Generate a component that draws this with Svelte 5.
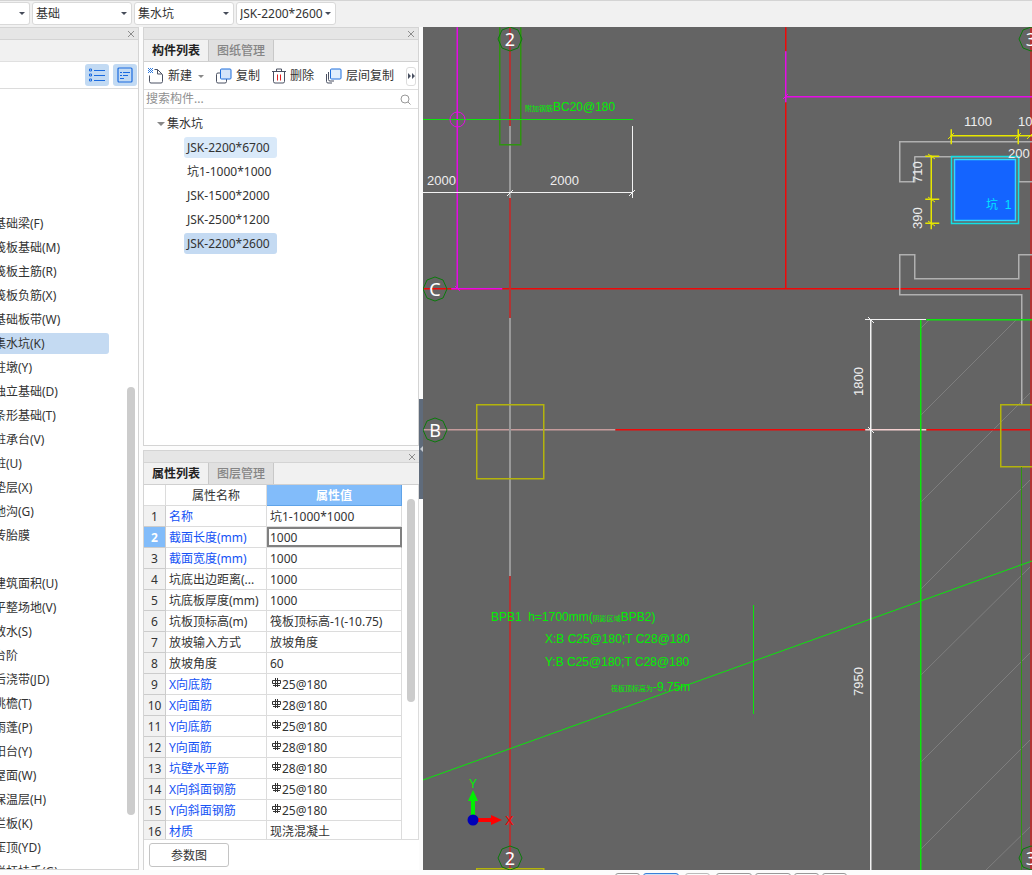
<script>
  const pickers = [
    { id: "floor", label: "楼层", options: [""] },
    { id: "group", label: "分组", options: ["基础"] },
    { id: "type", label: "构件类型", options: ["集水坑"] },
    { id: "component", label: "构件", options: ["JSK-2200*2600"] }
  ];

  const navGroups = [
    [
      "基础梁(F)",
      "筏板基础(M)",
      "筏板主筋(R)",
      "筏板负筋(X)",
      "基础板带(W)",
      "集水坑(K)",
      "柱墩(Y)",
      "独立基础(D)",
      "条形基础(T)",
      "桩承台(V)",
      "桩(U)",
      "垫层(X)",
      "地沟(G)",
      "砖胎膜"
    ],
    [
      "建筑面积(U)",
      "平整场地(V)",
      "散水(S)",
      "台阶",
      "后浇带(JD)",
      "挑檐(T)",
      "雨蓬(P)",
      "阳台(Y)",
      "屋面(W)",
      "保温层(H)",
      "栏板(K)",
      "压顶(YD)",
      "栏杆扶手(G)"
    ]
  ];
  let currNav = "集水坑(K)";

  const components = [
    "JSK-2200*6700",
    "坑1-1000*1000",
    "JSK-1500*2000",
    "JSK-2500*1200",
    "JSK-2200*2600"
  ];
  let currComponent = "JSK-2200*2600";
  const hoverComponent = "JSK-2200*6700";

  const props = [
    { name: "名称", value: "坑1-1000*1000", key: true },
    { name: "截面长度(mm)", value: "1000", key: true },
    { name: "截面宽度(mm)", value: "1000", key: true },
    { name: "坑底出边距离(...", value: "1000" },
    { name: "坑底板厚度(mm)", value: "1000" },
    { name: "坑板顶标高(m)", value: "筏板顶标高-1(-10.75)" },
    { name: "放坡输入方式", value: "放坡角度" },
    { name: "放坡角度", value: "60" },
    { name: "X向底筋", value: "25@180", key: true, rebar: true },
    { name: "X向面筋", value: "28@180", key: true, rebar: true },
    { name: "Y向底筋", value: "25@180", key: true, rebar: true },
    { name: "Y向面筋", value: "28@180", key: true, rebar: true },
    { name: "坑壁水平筋", value: "28@180", key: true, rebar: true },
    { name: "X向斜面钢筋", value: "25@180", key: true, rebar: true },
    { name: "Y向斜面钢筋", value: "25@180", key: true, rebar: true },
    { name: "材质", value: "现浇混凝土", key: true }
  ];
  let currRow = 1;

  // axis bubbles: label and centre
  const bubbles = [
    ["2", 510, 39],
    ["3", 1031, 39],
    ["C", 435, 289],
    ["B", 435, 430],
    ["2", 510, 858],
    ["3", 1031, 858]
  ];

  // 45 degree hatch of the thickened slab
  const hatch = [
    [921, 328, 930, 319],
    [921, 415, 1017, 319],
    [921, 502, 1032, 391],
    [921, 589, 1032, 478],
    [921, 675, 1032, 565],
    [921, 762, 1032, 651],
    [921, 849, 1032, 738],
    [986, 870, 1032, 825]
  ];

  function selectComponent(name) {
    return () => {
      currComponent = name;
    };
  }

  function selectNav(name) {
    return () => {
      currNav = name;
    };
  }
</script>

<style>
  :global(body) {
    margin: 0;
    overflow: hidden;
  }

  .app {
    height: 100vh;
    display: flex;
    flex-direction: column;
    background: #fcfcfc;
    color: #333;
    font-family: "Noto Sans", "Noto Sans CJK SC", sans-serif;
    font-size: 12px;
    line-height: 20px;
  }

  button,
  input,
  select {
    font: inherit;
    color: inherit;
    margin: 0;
    padding: 0;
    border: 0;
    background: none;
    box-sizing: border-box;
  }

  svg {
    display: block;
    flex: none;
  }

  /* top bar */
  .topbar {
    display: flex;
    flex: none;
    gap: 2px;
    height: 27px;
    padding-top: 1px;
    box-sizing: border-box;
    border-top: 1px solid #d4d4d4;
    background: #f1f1f1;
    overflow: hidden;
  }

  .picker {
    position: relative;
    width: 100px;
    height: 23px;
  }

  .picker:first-child {
    width: 30px;
  }

  .picker select {
    appearance: none;
    width: 100%;
    height: 23px;
    padding: 0 12px 0 3px;
    border: 1px solid #d9d9d9;
    border-radius: 3px;
    background: #fff;
  }

  .picker:first-child select {
    border-left: 0;
    border-radius: 0 3px 3px 0;
  }

  .picker:after {
    content: "";
    position: absolute;
    top: 10px;
    right: 5px;
    border: 3px solid transparent;
    border-top-color: #454b59;
    border-bottom: 0;
    pointer-events: none;
  }

  .main {
    flex: 1;
    min-height: 0;
    display: flex;
  }

  /* panels */
  .panel {
    display: flex;
    flex-direction: column;
    box-sizing: border-box;
    border: 1px solid #d4d4d4;
    background: #fff;
    overflow: hidden;
  }

  .panel__bar {
    flex: none;
    height: 11px;
    display: flex;
    justify-content: flex-end;
    align-items: center;
    padding-right: 3px;
    background: #e6e6e6;
  }

  .tabs {
    flex: none;
    display: flex;
    height: 23px;
    box-sizing: border-box;
    border-top: 1px solid #d4d4d4;
    border-bottom: 1px solid #d0d0d0;
    background: #f1f1f1;
  }

  .tabs__tab {
    width: 65px;
    border-right: 1px solid #c8c8c8;
    background: #e0e0e0;
    color: #858585;
    font-weight: 500;
  }

  .tabs__tab--active {
    background: #f1f1f1;
    color: #222;
    font-weight: 700;
  }

  /* module list */
  .nav {
    position: relative;
    width: 139px;
    flex: none;
    border-left: 0;
  }

  .nav__blank {
    flex: none;
    height: 21px;
    border-top: 1px solid #d4d4d4;
    border-bottom: 1px solid #e0e0e0;
    background: #f1f1f1;
  }

  .nav__tools {
    flex: none;
    display: flex;
    justify-content: flex-end;
    align-items: center;
    gap: 4px;
    height: 26px;
    padding: 0 1px;
    border-bottom: 1px solid #dcdcdc;
  }

  .nav__tool {
    width: 24px;
    height: 22px;
    display: flex;
    align-items: center;
    justify-content: center;
    border-radius: 3px;
    background: #c2daf3;
  }

  .nav__list {
    flex: 1;
    min-height: 0;
    margin: 0 0 0 -8px;
    padding: 123px 29px 0 0;
    list-style: none;
    overflow: hidden;
  }

  .nav__item {
    height: 24px;
    padding-top: 1px;
    box-sizing: border-box;
  }

  .nav__item--gap {
    margin-top: 24px;
  }

  .nav__button {
    display: block;
    width: 100%;
    height: 21px;
    padding-left: 2px;
    border-radius: 3px;
    text-align: left;
    white-space: nowrap;
    line-height: 21px;
  }

  .nav__button--active {
    background: #c4daf2;
  }

  .nav__thumb {
    position: absolute;
    top: 359px;
    right: 3px;
    bottom: 54px;
    width: 8px;
    border-radius: 4px;
    background: #ccc;
  }

  /* middle column */
  .side {
    width: 276px;
    flex: none;
    margin-left: 4px;
    display: flex;
    flex-direction: column;
    gap: 4px;
    background: #fcfcfc;
  }

  .list {
    flex: none;
    height: 419px;
  }

  .tools {
    flex: none;
    display: flex;
    align-items: center;
    height: 26px;
    padding: 1px 0 0 4px;
    border-bottom: 1px solid #dedede;
  }

  .tools__button {
    display: flex;
    align-items: center;
    gap: 4px;
    margin-right: 12px;
    white-space: nowrap;
  }

  .tools__caret {
    margin-left: 2px;
    border: 3px solid transparent;
    border-top-color: #888;
    border-bottom: 0;
  }

  .tools__more {
    flex: none;
    display: flex;
    align-items: center;
    justify-content: center;
    width: 10px;
    height: 19px;
    margin-left: auto;
    margin-right: 2px;
    border: 1px solid #ddd;
    border-radius: 3px;
  }

  .tools__button:nth-last-child(2) {
    margin-right: 0;
  }

  .search {
    flex: none;
    display: flex;
    align-items: center;
    height: 18px;
    padding: 0 7px 0 2px;
    border-bottom: 1px solid #dedede;
  }

  .search input {
    flex: 1;
    min-width: 0;
    height: 18px;
    outline: none;
  }

  .search input::placeholder {
    color: #909090;
    opacity: 1;
  }

  .tree {
    margin: 0;
    padding: 4px 0 0 13px;
    list-style: none;
  }

  .tree__root {
    display: flex;
    align-items: center;
    gap: 2px;
    height: 22px;
  }

  .tree__caret {
    border: 4px solid transparent;
    border-top: 4px solid #888;
    border-bottom: 0;
    width: 0;
  }

  .tree ul {
    margin: 0;
    padding: 0 0 0 27px;
    list-style: none;
  }

  .tree ul li {
    height: 24px;
    padding-top: 2px;
    box-sizing: border-box;
  }

  .tree__node {
    height: 21px;
    min-width: 93px;
    padding: 0 3px;
    border-radius: 3px;
    text-align: left;
  }

  .tree__node--hover {
    background: #d9e9f9;
  }

  .tree__node--active {
    background: #c4daf2;
  }

  /* properties */
  .props {
    flex: 1;
    min-height: 0;
    border-bottom: 0;
    border-right: 0;
  }

  .props__scroll {
    position: relative;
    flex: 1;
    min-height: 0;
    overflow: hidden;
    border-right: 1px solid #dcdcdc;
    border-bottom: 1px solid #dcdcdc;
  }

  .props__thumb {
    position: absolute;
    top: 14px;
    right: 3px;
    width: 8px;
    height: 203px;
    border-radius: 4px;
    background: #ccc;
  }

  table {
    width: 258px;
    table-layout: fixed;
    border-collapse: separate;
    border-spacing: 0;
  }

  .col-index {
    width: 22px;
  }

  .col-name {
    width: 101px;
  }

  th,
  td {
    height: 21px;
    padding: 2px 3px 0;
    box-sizing: border-box;
    border-right: 1px solid #dcdcdc;
    border-bottom: 1px solid #dcdcdc;
    font-weight: 400;
    line-height: 18px;
    text-align: left;
    white-space: nowrap;
  }

  thead th {
    text-align: center;
  }

  thead .props__value-head {
    border-color: #5fa3e8;
    background: #82bcfa;
    color: #fff;
    font-weight: 700;
  }

  tbody th {
    padding: 2px 0 0;
    background: #f1f1f1;
    border-color: #ccc;
    text-align: center;
  }

  tbody .props__index--active {
    background: #82bcfa;
    color: #fff;
    font-weight: 700;
  }

  .props__key {
    color: #1452f5;
  }

  .props__edit {
    padding: 0;
    border-right-color: #808080;
  }

  .props__edit input {
    display: block;
    width: 100%;
    height: 20px;
    padding: 1px 1px 0;
    border: 2px solid #808080;
    border-right-width: 1px;
    outline: none;
  }

  .rebar {
    display: flex;
    align-items: center;
    gap: 1px;
    height: 18px;
    padding-bottom: 1px;
    box-sizing: border-box;
  }

  .rebar svg {
    margin: 0 0 4px 2px;
  }

  .props__foot {
    flex: none;
    height: 30px;
    padding: 3px 5px 0;
    box-sizing: border-box;
  }

  .props__foot button {
    width: 80px;
    height: 24px;
    padding-top: 1px;
    border: 1px solid #c4c4c4;
    border-radius: 3px;
  }

  .splitter {
    width: 4px;
    flex: none;
    display: flex;
    flex-direction: column;
    background: #fcfcfc;
  }

  .splitter button {
    height: 100px;
    margin-top: 372px;
    display: flex;
    align-items: center;
    justify-content: flex-end;
    background: #5f6b7b;
  }

  /* drawing */
  .canvas {
    flex: 1;
    min-width: 0;
    background: #646464;
    overflow: hidden;
  }

  .canvas svg {
    width: 100%;
    height: 100%;
  }

  .geo {
    fill: none;
    shape-rendering: crispEdges;
  }

  .soft {
    fill: none;
    stroke-width: 1.5;
  }

  .red {
    stroke: #f00808;
  }

  .axis {
    stroke: #b23434;
    stroke-width: 2;
  }

  .dim-axis {
    stroke: #999;
    stroke-width: 2;
  }

  .magenta {
    stroke: #e60ae6;
  }

  .green {
    stroke: #0be60b;
  }

  .beam {
    stroke: #2f9410;
  }

  .yellow {
    stroke: #e6e600;
  }

  .column {
    stroke: #b4b40c;
  }

  .wall {
    stroke: #b0b0b0;
  }

  .white {
    stroke: #f2f2f2;
  }

  .hatch {
    stroke: #7e7e7e;
  }

  .bubble {
    fill: none;
    stroke: #0b7a0b;
    stroke-width: 1;
  }

  .bubble-text {
    fill: #fff;
    font-size: 18px;
    text-anchor: middle;
  }

  .cad {
    fill: #eee;
    font-family: "Liberation Sans", "Noto Sans CJK SC", sans-serif;
    font-size: 13px;
  }

  .cad--green {
    fill: #00f000;
    font-size: 12px;
  }

  .cad--cyan {
    fill: #00e5ff;
    font-size: 12px;
  }

  .cad--red {
    fill: #f00;
  }

  .cad__han {
    font-size: 7px;
  }

  /* view tabs under the drawing */
  .footer {
    flex: none;
    display: flex;
    justify-content: flex-start;
    gap: 3px;
    height: 5px;
    padding: 3px 0 0 615px;
    box-sizing: border-box;
    overflow: hidden;
  }

  .footer button {
    flex: none;
    width: 25px;
    height: 20px;
    border: 1px solid #999;
    border-radius: 3px;
  }

  .footer .footer__wide {
    width: 36px;
  }

  .footer .footer__active {
    border-color: #3a80d8;
    background: #cfe2f7;
  }

  .footer .footer__off {
    margin: 0 3px;
    border-color: #bbb;
  }
</style>

{#snippet close()}
  <svg width="8" height="8" viewBox="0 0 8 8" stroke="#8c8c8c" fill="none">
    <path d="M1 1l6 6M7 1l-6 6" />
  </svg>
{/snippet}

<div class="app">
  <header class="topbar">
    {#each pickers as picker}
      <div class="picker">
        <select id={picker.id} aria-label={picker.label}>
          {#each picker.options as option}
            <option>{option}</option>
          {/each}
        </select>
      </div>
    {/each}
  </header>

  <div class="main">
    <nav class="panel nav">
      <div class="panel__bar">{@render close()}</div>
      <div class="nav__blank"></div>
      <div class="nav__tools">
        <button class="nav__tool" aria-label="列表">
          <svg width="16" height="14" viewBox="0 0 16 14" fill="none" stroke="#1a6be0">
            <path d="M5 2.500h11M5 7.500h11M5 12.500h11" />
            <path d="M.5 1h2v2h-2zM.5 6h2v2h-2zM.5 11h2v2h-2z" />
          </svg>
        </button>
        <button class="nav__tool" aria-label="详情">
          <svg width="16" height="16" viewBox="0 0 16 16" fill="none" stroke="#1a6be0">
            <rect x="1" y="1" width="14" height="14" rx="1" stroke-width="1.200" />
            <path d="M3 5.500h2M6 5.500h7M3 8.500h2M6 8.500h5M3 11.500h4" />
          </svg>
        </button>
      </div>
      <ul class="nav__list">
        {#each navGroups as group, g}
          {#each group as item, i}
            <li class="nav__item" class:nav__item--gap={g > 0 && i === 0}>
              <button
                class="nav__button"
                class:nav__button--active={item === currNav}
                on:click={selectNav(item)}>
                {item}
              </button>
            </li>
          {/each}
        {/each}
      </ul>
      <div class="nav__thumb"></div>
    </nav>

    <div class="side">
      <section class="panel list">
        <div class="panel__bar">{@render close()}</div>
        <div class="tabs">
          <button class="tabs__tab tabs__tab--active">构件列表</button>
          <button class="tabs__tab">图纸管理</button>
        </div>
        <div class="tools">
          <button class="tools__button">
            <svg width="16" height="16" viewBox="0 0 16 16" fill="none" stroke="#4a5162">
              <path d="M6.500 1.500h3l5 5v7a1.500 1.500 0 0 1-1.500 1.500H3a1.500 1.500 0 0 1-1.500-1.500V7.500M9.500 1.500v4.500h4.500" />
              <path d="M0 .5h5M0 2.500h5M0 4.500h5" stroke="#2f7be0" stroke-dasharray="1 1" />
              <path d="M1 1.500h4M1 3.500h4" stroke="#2f7be0" stroke-dasharray="1 1" />
            </svg>
            新建
            <span class="tools__caret"></span>
          </button>
          <button class="tools__button">
            <svg width="16" height="16" viewBox="0 0 16 16" fill="none" stroke="#4a5162">
              <path d="M5 5H2a1.500 1.500 0 0 0-1.500 1.500v7A1.500 1.500 0 0 0 2 15h7a1.500 1.500 0 0 0 1.500-1.500V11" />
              <rect x="4.500" y="1" width="10.500" height="10" rx="1" fill="#d3e4fa" stroke="#1f6fdc" />
            </svg>
            复制
          </button>
          <button class="tools__button">
            <svg width="14" height="16" viewBox="0 0 14 16" fill="none" stroke="#4a5162">
              <path d="M0 3.500h14M4.500 3V1h5v2M1.500 4v9.500a1.500 1.500 0 0 0 1.500 1.500h8a1.500 1.500 0 0 0 1.500-1.500V4" />
              <path d="M5.500 6.500v6M8.500 6.500v6" stroke="#e02020" />
            </svg>
            删除
          </button>
          <button class="tools__button">
            <svg width="16" height="16" viewBox="0 0 16 16" fill="none" stroke="#4a5162">
              <path d="M.5 6v7.500A1.500 1.500 0 0 0 2 15h4M2.500 4v7.500A1.500 1.500 0 0 0 4 13h4" />
              <rect x="4.500" y="1" width="10.500" height="10" rx="1" fill="#e0eefd" stroke="#1f6fdc" />
            </svg>
            层间复制
          </button>
          <button class="tools__more" aria-label="更多">
            <svg width="8" height="6" viewBox="0 0 8 6" fill="#4a5162">
              <path d="M1 0l3 3-3 3zM5 0l3 3-3 3z" />
            </svg>
          </button>
        </div>
        <div class="search">
          <input type="text" placeholder="搜索构件..." aria-label="搜索构件" />
          <svg width="11" height="11" viewBox="0 0 11 11" fill="none" stroke="#999">
            <circle cx="5" cy="5" r="4" />
            <path d="M8 8l2.500 2.500" />
          </svg>
        </div>
        <ul class="tree">
          <li>
            <div class="tree__root"><span class="tree__caret"></span>集水坑</div>
            <ul>
              {#each components as name}
                <li>
                  <button
                    class="tree__node"
                    class:tree__node--hover={name === hoverComponent}
                    class:tree__node--active={name === currComponent}
                    on:click={selectComponent(name)}>
                    {name}
                  </button>
                </li>
              {/each}
            </ul>
          </li>
        </ul>
      </section>

      <section class="panel props">
        <div class="panel__bar">{@render close()}</div>
        <div class="tabs">
          <button class="tabs__tab tabs__tab--active">属性列表</button>
          <button class="tabs__tab">图层管理</button>
        </div>
        <div class="props__scroll">
          <table>
            <colgroup>
              <col class="col-index" />
              <col class="col-name" />
              <col />
            </colgroup>
            <thead>
              <tr>
                <th></th>
                <th>属性名称</th>
                <th class="props__value-head">属性值</th>
              </tr>
            </thead>
            <tbody>
              {#each props as prop, idx}
                <tr>
                  <th class:props__index--active={idx === currRow}>{idx + 1}</th>
                  <td class:props__key={prop.key}>{prop.name}</td>
                  {#if idx === currRow}
                    <td class="props__edit">
                      <input type="text" aria-label={prop.name} bind:value={prop.value} />
                    </td>
                  {:else if prop.rebar}
                    <td>
                      <div class="rebar">
                        <svg width="9" height="9" viewBox="0 0 9 9" fill="none" stroke="#333">
                          <path d="M3.500 2.500H.5v3h8v-3h-3M3.500 0v9M5.500 0v9M1 7.500h7M3.500 2.500h2" />
                        </svg>
                        {prop.value}
                      </div>
                    </td>
                  {:else}
                    <td>{prop.value}</td>
                  {/if}
                </tr>
              {/each}
            </tbody>
          </table>
          <div class="props__thumb"></div>
        </div>
        <div class="props__foot">
          <button>参数图</button>
        </div>
      </section>
    </div>

    <div class="splitter">
      <button aria-label="收起">
        <svg width="3" height="6" viewBox="0 0 3 6" fill="#c8ccd2"><path d="M3 0v6L0 3z" /></svg>
      </button>
    </div>

    <main class="canvas">
      <svg viewBox="423 27 609 843" preserveAspectRatio="xMinYMin slice">
        {#each hatch as [x1, y1, x2, y2]}
          <line class="hatch" {x1} {y1} {x2} {y2} />
        {/each}

        <!-- axis grid -->
        <g class="soft" transform="translate(.25 .25)">
          <path class="red" d="M423 288.500H1032M615 429.500H865M926 429.500H1032M785.500 27V51M785.500 102V288" />
          <path stroke="#c69c9c" d="M423 429.500H615" />
          <path stroke="#f5d0d0" d="M865 429.500H926" />
        </g>
        <g class="geo">
          <path class="axis" d="M510 27V126M510 198V318M510 576V870M1031 27V870" />
          <path class="dim-axis" d="M510 126V198M510 318V576" />
        </g>

        <!-- beams, columns and walls -->
        <g class="soft" transform="translate(.25 .25)">
          <path class="beam" d="M499.500 27V144.500H520.500V27" />
          <path class="column" d="M476.500 404.500H543.500V478.500H476.500ZM1032 404.500H1000.500V466.500H1032M476.500 870V868.500H543.500V870" />
          <path class="wall" d="M914.500 156V181.500H899.500V141.500H1032M914.500 156.500H1018.500V181.500H1032" />
          <path class="wall" d="M1032 254.500H1018.500V278.500H914.500V254.500H899.500V294.500H1021.500V404" />
          <path class="magenta" d="M457 27V289M451 288.500H502M785.500 51V102M785 96.500H1032" />
          <path class="green" d="M926 319.500H1032M920.500 319V870" />
        </g>
        <g class="geo">
          <path class="beam" d="M1021.500 467V870" />
          <path class="green" d="M423 119.500H633M753.500 605V714" />
        </g>
        <line class="green" x1="423" y1="780" x2="1032" y2="561" />
        <circle class="magenta" cx="457.500" cy="119.500" r="7.500" fill="none" />
        <path class="magenta" fill="none" d="M783 99l5-5M455 286l5 5" />

        <!-- dimension lines -->
        <g class="geo">
          <path class="white" d="M423 192.500H633M632.500 126V198M865 319.500H926" />
        </g>
        <g class="soft" transform="translate(.25 .25)">
          <path class="white" d="M870.500 319V870" />
          <path class="yellow" d="M950 135.500H1032M951 129V144M1018 129V144M931 155V229M925 156H939M925 199H939M925 223H939" />
        </g>
        <path class="white" d="M507 196l6-6M629 196l6-6M868 317l6 6M868 427l6 6" />
        <path class="yellow" d="M948 139l6-6M1015 139l6-6M1027 139l5-5M928 154l7 5M928 197l7 5M928 221l7 5" />

        <!-- selected pit -->
        <g class="soft">
          <rect x="951.500" y="156.500" width="67" height="67" stroke="#12e0e4" />
          <rect x="954.500" y="159.500" width="61" height="61" stroke="#30d8ff" fill="#1464ff" />
        </g>

        <g class="cad">
          <text x="427" y="185">2000</text>
          <text x="550" y="185">2000</text>
          <text x="964" y="126">1100</text>
          <text x="1018" y="126">100</text>
          <text x="1008" y="158">200</text>
          <text transform="translate(922 183) rotate(-90)">710</text>
          <text transform="translate(922 229) rotate(-90)">390</text>
          <text transform="translate(863 396) rotate(-90)">1800</text>
          <text transform="translate(863 696) rotate(-90)">7950</text>
        </g>
        <g class="cad cad--green">
          <text x="525" y="111"><tspan class="cad__han">附加钢筋</tspan>BC20@180</text>
          <text x="491" y="621">BPB1&nbsp; h=1700mm(<tspan class="cad__han">阴影区域</tspan>BPB2)</text>
          <text x="545" y="643">X:B C25@180;T C28@180</text>
          <text x="545" y="666">Y:B C25@180;T C28@180</text>
          <text x="611" y="691"><tspan class="cad__han">筏板顶标高为</tspan>-9.75m</text>
        </g>
        <text class="cad cad--cyan" x="986" y="209">坑&nbsp; 1</text>

        {#each bubbles as [label, x, y]}
          <polygon
            class="bubble"
            transform="translate({x} {y})"
            points="0,-12 8,-9 12,0 8,9 0,12 -8,9 -12,0 -8,-9" />
          <text class="bubble-text" {x} y={y + 7}>{label}</text>
        {/each}

        <!-- UCS icon -->
        <path d="M471 815V801H468L473 790L478 801H475V815Z" fill="#00f000" />
        <path d="M478 818H491V815L502 820L491 825V822H478Z" fill="#f00" />
        <circle cx="473" cy="820" r="5.500" fill="#0000b8" />
        <text class="cad cad--green" x="469" y="788">Y</text>
        <text class="cad cad--red" x="505" y="825">X</text>
      </svg>
    </main>
  </div>

  <footer class="footer">
    <button aria-label="视图 1"></button>
    <button class="footer__wide footer__active" aria-label="视图 2"></button>
    <button class="footer__off" aria-label="视图 3"></button>
    <button class="footer__wide" aria-label="视图 4"></button>
    <button class="footer__wide" aria-label="视图 5"></button>
    <button aria-label="视图 6"></button>
    <button aria-label="视图 7"></button>
  </footer>
</div>
